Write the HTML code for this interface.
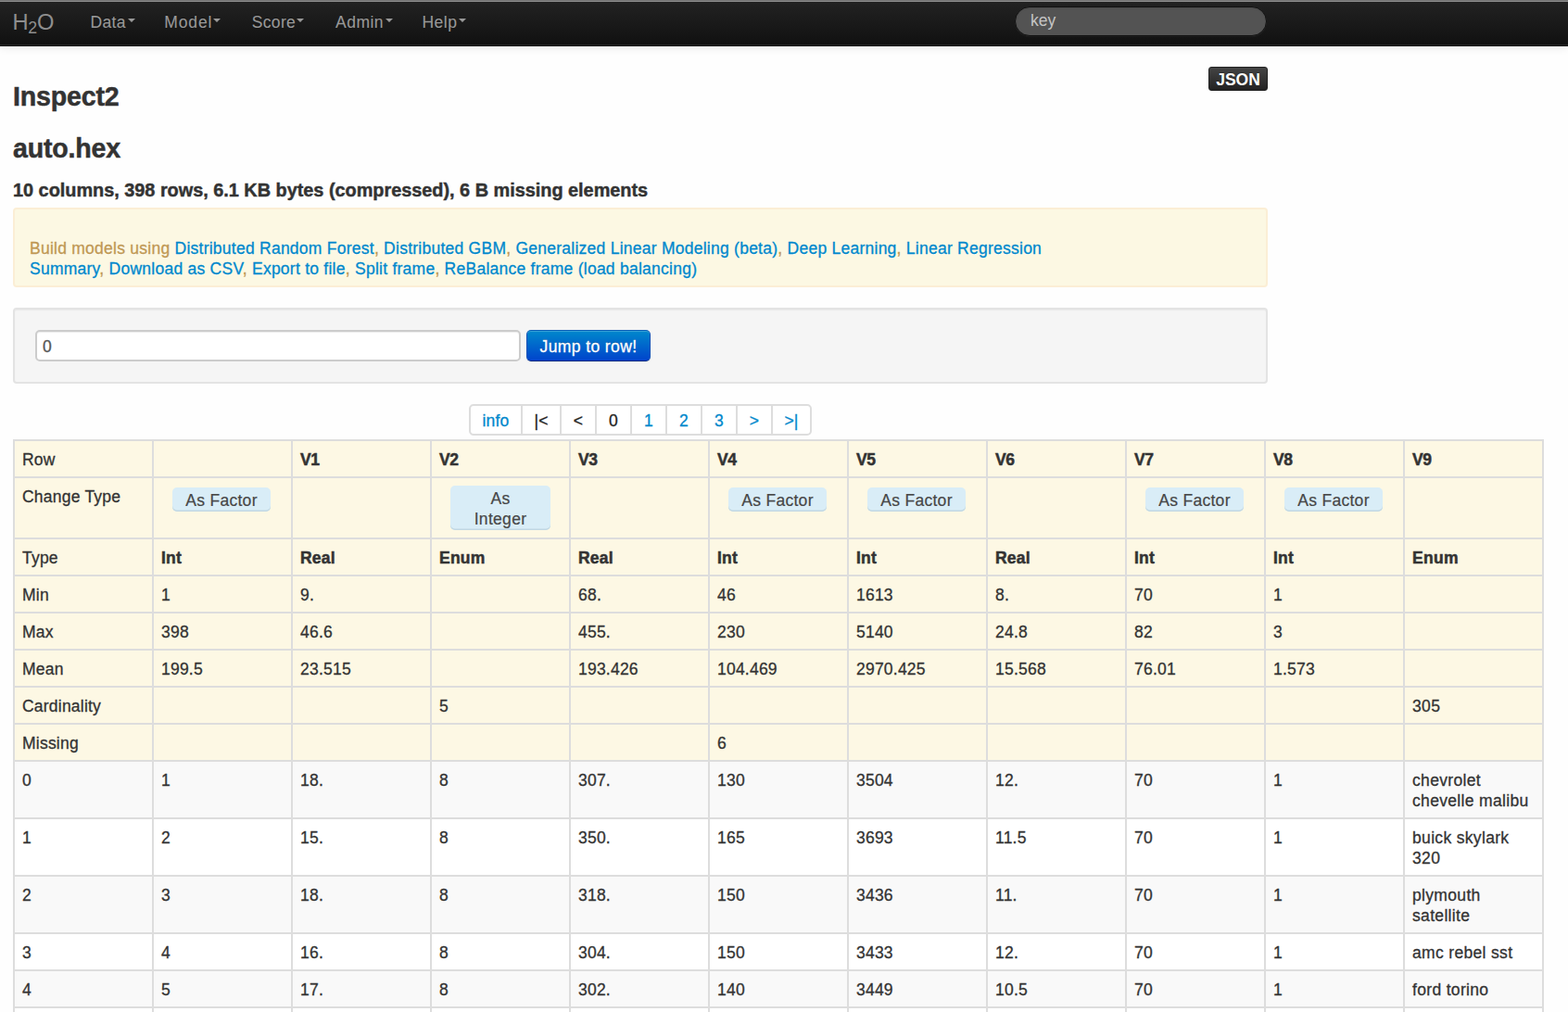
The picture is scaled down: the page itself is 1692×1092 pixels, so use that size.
<!DOCTYPE html>
<html lang="en">
<head>
<meta charset="utf-8">
<title>H2O - Inspect2</title>
<style>
*{box-sizing:border-box;}
html,body{margin:0;padding:0;}
body{width:1692px;height:1092px;overflow:hidden;background:#fefefe;color:#333;
  font-family:"Liberation Sans","Helvetica Neue",Helvetica,Arial,sans-serif;font-size:17.5px;line-height:22px;position:relative;-webkit-text-stroke:.3px;}
a{color:#0088cc;text-decoration:none;}
.abs{position:absolute;}

/* navbar */
.navbar{position:absolute;left:0;top:0;width:1692px;height:49px;border-top:2px solid #727272;
  background:linear-gradient(to bottom,#222 0%,#111 100%);
  box-shadow:0 1px 0 #151515,0 2px 9px rgba(0,0,0,.1);border-bottom:1px solid #252525;}
.navbar:before{content:"";position:absolute;left:0;top:-1px;width:100%;height:1px;background:#8d8d8d;}
.brand{position:absolute;left:13.5px;top:10px;font-size:23.7px;line-height:25px;color:#8e8e8e;-webkit-text-stroke:0;font-weight:400;letter-spacing:-.4px;white-space:nowrap;}
.brand sub{font-size:17.8px;line-height:0;position:relative;vertical-align:baseline;bottom:-4px;letter-spacing:0;}
.nav{list-style:none;margin:0;padding:0;}
.nav li{position:absolute;top:11px;color:#999;line-height:22px;white-space:nowrap;letter-spacing:.35px;-webkit-text-stroke:.1px;text-shadow:0 -1px 0 rgba(0,0,0,.25);}
.caret{display:inline-block;width:0;height:0;vertical-align:top;margin-top:7px;margin-left:2px;
  border-top:4.5px solid #999;border-left:4.5px solid transparent;border-right:4.5px solid transparent;}
.search{position:absolute;left:1095px;top:5px;width:272px;height:32px;border:1px solid #111;border-radius:16px;background:#535353;
  box-shadow:inset 0 1px 2px rgba(0,0,0,.1),0 1px 0 rgba(255,255,255,.04);color:#c4c4c4;-webkit-text-stroke:0;padding:0 0 0 16px;line-height:29px;font-size:17.5px;}

/* headings */
.json{position:absolute;left:1304px;top:72px;width:64px;height:26px;border-radius:3px;border:1px solid #222;
  background:linear-gradient(to bottom,#444 0%,#222 100%);color:#fff;font-weight:700;text-align:center;line-height:26px;
  text-shadow:0 -1px 0 rgba(0,0,0,.25);font-size:17.5px;-webkit-text-stroke:0;}
h3,h4{margin:0;padding:0;position:absolute;left:14px;white-space:nowrap;color:#333;font-weight:700;}
h3{font-size:28.6px;line-height:34px;letter-spacing:-.2px;-webkit-text-stroke:.5px;}
h4{font-size:19.9px;line-height:24px;-webkit-text-stroke:.45px;letter-spacing:-.02px;}

/* alert */
.alert{position:absolute;left:14px;top:224px;width:1354px;height:86px;background:#fcf8e3;border:2px solid #fbeed5;border-radius:4px;
  color:#c09853;padding:31px 0 0 16px;line-height:22px;letter-spacing:.25px;white-space:nowrap;text-shadow:0 1px 0 rgba(255,255,255,.5);}

/* well */
.well{position:absolute;left:14px;top:332px;width:1354px;height:82px;background:#f5f5f5;border:2px solid #e3e3e3;border-radius:4px;
  box-shadow:inset 0 1px 1px rgba(0,0,0,.05);}
.inp{position:absolute;left:38px;top:356px;width:524px;height:34px;background:#fff;border:2px solid #ccc;border-radius:5px;
  box-shadow:inset 0 1px 1px rgba(0,0,0,.075);color:#555;padding:0 0 0 6px;line-height:32px;}
.go{position:absolute;left:568px;top:356px;width:134px;height:34px;border-radius:5px;border:1px solid #0040b5;
  border-color:#0a5fb8 #0a4fb8 #002a80;
  background:linear-gradient(to bottom,#0088cc 0%,#0044cc 100%);color:#fff;text-align:center;line-height:35px;
  text-shadow:0 -1px 0 rgba(0,0,0,.25);letter-spacing:.4px;box-shadow:inset 0 1px 0 rgba(255,255,255,.2),0 1px 2px rgba(0,0,0,.05);}

/* pagination */
.pag{position:absolute;left:506px;top:436px;height:34px;width:370px;margin:0;padding:0;list-style:none;display:flex;
  border:2px solid #ddd;border-radius:5px;background:#fff;overflow:hidden;}
.pag li{height:30px;line-height:33px;text-align:center;letter-spacing:.2px;border-right:2px solid #ddd;color:#0088cc;flex:none;}
.pag li:last-child{border-right:0;}
.pag li.d{color:#222;}

/* table */
table{position:absolute;left:14px;top:474px;width:1652px;border-collapse:separate;border-spacing:0;table-layout:fixed;
  border:2px solid #ddd;border-left:0;border-top:0;}
td{letter-spacing:.22px;width:150px;border-left:2px solid #ddd;border-top:2px solid #ddd;padding:9px 6px 7px 8px;vertical-align:top;line-height:22px;height:40px;
  overflow:hidden;}
tr.hd td{background:#fdf8e4;}
tr.odd td{background:#f9f9f9;}
tr.even td{background:#fff;}
td:last-child{letter-spacing:.33px;}
td b{font-weight:700;-webkit-text-stroke:.5px;}
tr.r0 b{letter-spacing:-.5px;}
tr.ct td{height:66px;padding-top:9px;}
.bt{display:block;margin:1px 0 0 12px;width:106px;height:26px;line-height:28px;letter-spacing:.3px;text-align:center;background:#d9edf7;border-radius:5px;
  color:#474747;box-shadow:inset 0 -1.5px 0 #c2d8e3;-webkit-text-stroke:.2px;}
.bt.two{margin-top:-1px;width:108px;height:48px;line-height:22px;padding-top:3px;}
</style>
</head>
<body>
<div class="navbar">
  <a class="brand">H<sub>2</sub>O</a>
  <ul class="nav">
    <li style="left:97.4px">Data<span class="caret"></span></li>
    <li style="left:177.3px;letter-spacing:.85px">Model<span class="caret" style="margin-left:.6px"></span></li>
    <li style="left:271.7px">Score<span class="caret" style="margin-left:1px"></span></li>
    <li style="left:362px;letter-spacing:.5px">Admin<span class="caret"></span></li>
    <li style="left:455.4px;letter-spacing:.5px">Help<span class="caret"></span></li>
  </ul>
  <div class="search">key</div>
</div>

<a class="json">JSON</a>
<h3 style="top:87px">Inspect2</h3>
<h3 style="top:143px">auto.hex</h3>
<h4 style="top:193px">10 columns, 398 rows, 6.1 KB bytes (compressed), 6 B missing elements</h4>

<div class="alert">Build models using <a>Distributed Random Forest</a>, <a>Distributed GBM</a>, <a>Generalized Linear Modeling (beta)</a>, <a>Deep Learning</a>, <a>Linear Regression</a><br><a>Summary</a>, <a>Download as CSV</a>, <a>Export to file</a>, <a>Split frame</a>, <a>ReBalance frame (load balancing)</a></div>

<div class="well"></div>
<div class="inp">0</div>
<div class="go">Jump to row!</div>

<ul class="pag">
  <li style="width:56px">info</li><li class="d" style="width:42px">|&lt;</li><li class="d" style="width:38px">&lt;</li><li class="d" style="width:38px">0</li><li style="width:38px">1</li><li style="width:38px">2</li><li style="width:38px">3</li><li style="width:38px">&gt;</li><li style="width:40px">&gt;|</li>
</ul>

<table>
<tr class="hd r0"><td>Row</td><td></td><td><b>V1</b></td><td><b>V2</b></td><td><b>V3</b></td><td><b>V4</b></td><td><b>V5</b></td><td><b>V6</b></td><td><b>V7</b></td><td><b>V8</b></td><td><b>V9</b></td></tr>
<tr class="hd ct"><td>Change Type</td><td><span class="bt">As Factor</span></td><td></td><td><span class="bt two">As<br>Integer</span></td><td></td><td><span class="bt">As Factor</span></td><td><span class="bt">As Factor</span></td><td></td><td><span class="bt">As Factor</span></td><td><span class="bt">As Factor</span></td><td></td></tr>
<tr class="hd"><td>Type</td><td><b>Int</b></td><td><b>Real</b></td><td><b>Enum</b></td><td><b>Real</b></td><td><b>Int</b></td><td><b>Int</b></td><td><b>Real</b></td><td><b>Int</b></td><td><b>Int</b></td><td><b>Enum</b></td></tr>
<tr class="hd"><td>Min</td><td>1</td><td>9.</td><td></td><td>68.</td><td>46</td><td>1613</td><td>8.</td><td>70</td><td>1</td><td></td></tr>
<tr class="hd"><td>Max</td><td>398</td><td>46.6</td><td></td><td>455.</td><td>230</td><td>5140</td><td>24.8</td><td>82</td><td>3</td><td></td></tr>
<tr class="hd"><td>Mean</td><td>199.5</td><td>23.515</td><td></td><td>193.426</td><td>104.469</td><td>2970.425</td><td>15.568</td><td>76.01</td><td>1.573</td><td></td></tr>
<tr class="hd"><td>Cardinality</td><td></td><td></td><td>5</td><td></td><td></td><td></td><td></td><td></td><td></td><td>305</td></tr>
<tr class="hd"><td>Missing</td><td></td><td></td><td></td><td></td><td>6</td><td></td><td></td><td></td><td></td><td></td></tr>
<tr class="odd"><td>0</td><td>1</td><td>18.</td><td>8</td><td>307.</td><td>130</td><td>3504</td><td>12.</td><td>70</td><td>1</td><td>chevrolet<br>chevelle malibu</td></tr>
<tr class="even"><td>1</td><td>2</td><td>15.</td><td>8</td><td>350.</td><td>165</td><td>3693</td><td>11.5</td><td>70</td><td>1</td><td>buick skylark<br>320</td></tr>
<tr class="odd"><td>2</td><td>3</td><td>18.</td><td>8</td><td>318.</td><td>150</td><td>3436</td><td>11.</td><td>70</td><td>1</td><td>plymouth<br>satellite</td></tr>
<tr class="even"><td>3</td><td>4</td><td>16.</td><td>8</td><td>304.</td><td>150</td><td>3433</td><td>12.</td><td>70</td><td>1</td><td>amc rebel sst</td></tr>
<tr class="odd"><td>4</td><td>5</td><td>17.</td><td>8</td><td>302.</td><td>140</td><td>3449</td><td>10.5</td><td>70</td><td>1</td><td>ford torino</td></tr>
<tr class="even"><td></td><td></td><td></td><td></td><td></td><td></td><td></td><td></td><td></td><td></td><td></td></tr>
</table>
</body>
</html>
